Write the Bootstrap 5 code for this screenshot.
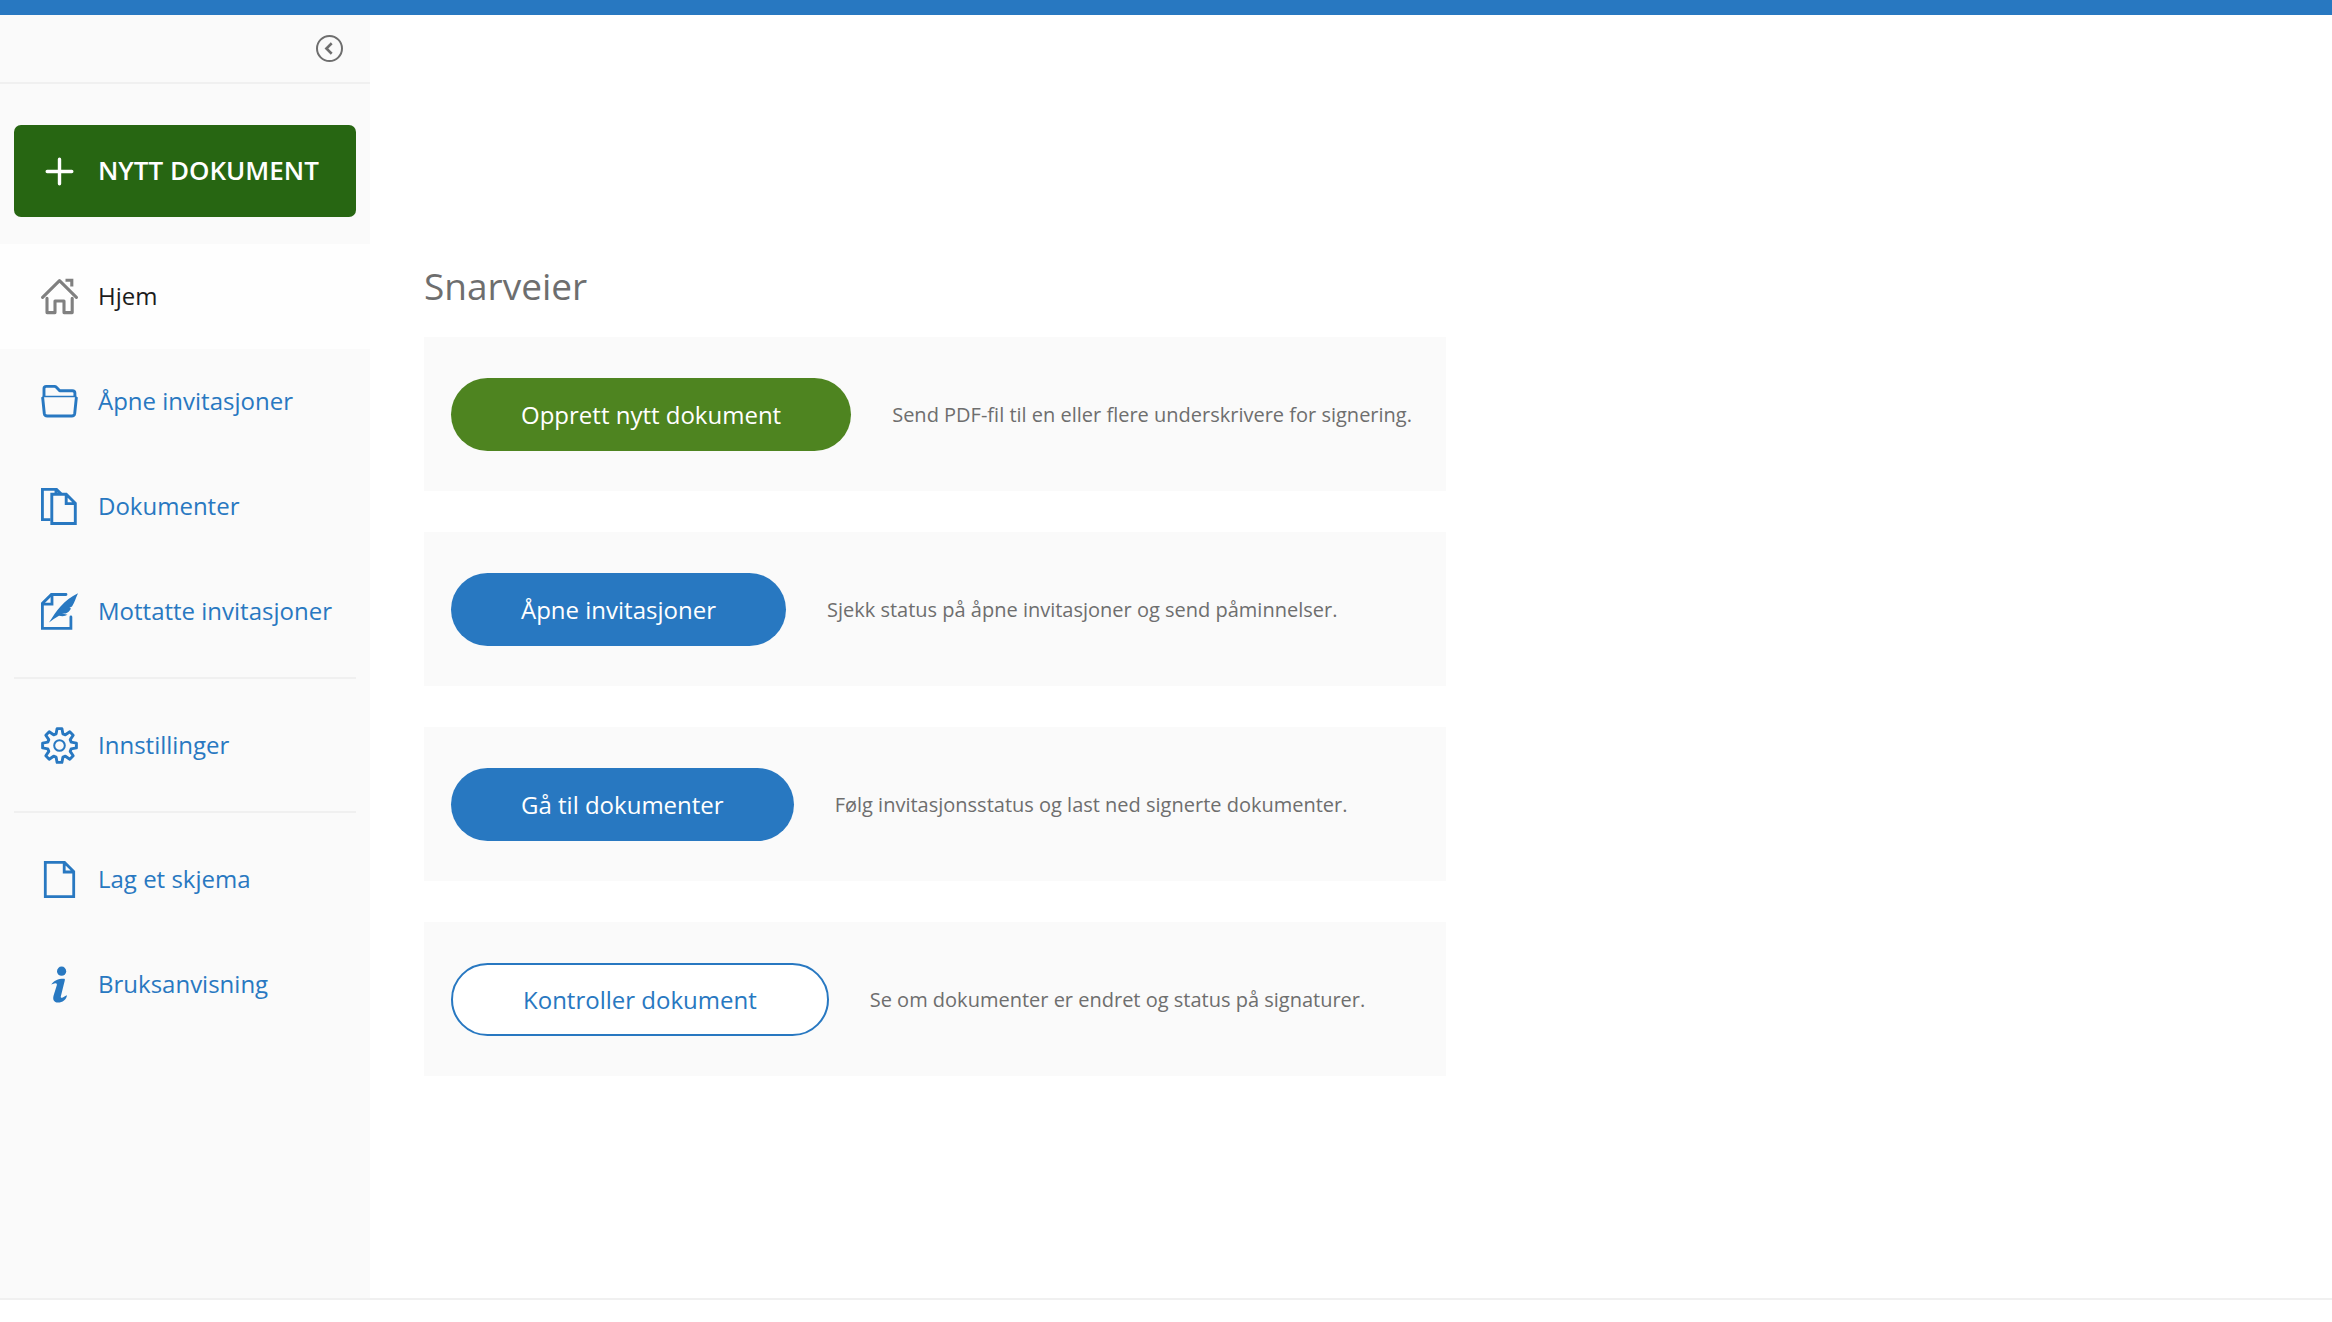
<!DOCTYPE html>
<html lang="nb">
<head>
<meta charset="utf-8">
<meta name="viewport" content="width=device-width, initial-scale=1">
<title>Hjem</title>
<link href="https://cdn.jsdelivr.net/npm/bootstrap@5.3.0/dist/css/bootstrap.min.css" rel="stylesheet">
<style>
:root { --brand: #2878c1; --soft: #fafafa; --rule: #f0f0f0; --muted: #6e6e6e; }
body { font-family: "Open Sans", sans-serif; font-size: 24px; line-height: 32px; background: #fff; color: var(--muted); }
.app-shell { border-top: 15px solid var(--brand); }
.app-body { border-bottom: 2px solid var(--rule); }
.app-footer { height: 22px; }
.side-panel { width: 370px; background: var(--soft); }
.side-head { height: 69px; padding-right: 27px; border-bottom: 2px solid var(--rule); }
.toggle-btn { width: 27px; height: 27px; color: #6e6e6e; }
.new-wrap { padding: 41px 14px 27px; }
.new-btn { height: 92px; padding: 0 27px; gap: 20px; border-radius: 7px; background: #276612; color: #fff; font-size: 26px; font-weight: 600; }
.new-btn:hover { background: #1f540e; color: #fff; }
.side-link { height: 105px; padding: 0 41px; gap: 20px; color: var(--brand); }
.side-link.active { background: #fefefe; color: #1c1c1c; }
.side-link.active svg { color: #808080; }
.side-text { padding-bottom: 2px; }
.side-icon { width: 37px; height: 37px; flex: none; }
.side-rule { height: 2px; margin: 13px 14px 14px; background: var(--rule); }
.main-area { padding: 245px 54px 80px; }
.main-title { font-size: 37px; line-height: 52px; font-weight: 400; margin: 0 0 25px; color: var(--muted); }
.shortcut-list { gap: 41px; min-width: 1022px; }
.shortcut { padding: 41px 27px 40px; gap: 41px; background: var(--soft); font-size: 20px; }
.pill-btn { height: 73px; padding: 0 70px; border-radius: 37px; font-size: 24px; border: 0; color: #fff; }
.pill-green, .pill-green:hover { background: #4e8420; color: #fff; }
.pill-blue, .pill-blue:hover { background: var(--brand); color: #fff; }
.pill-outline, .pill-outline:hover { background: #fff; color: var(--brand); border: 2px solid var(--brand); }
</style>
<script src="https://cdn.jsdelivr.net/npm/bootstrap@5.3.0/dist/js/bootstrap.bundle.min.js"></script>
</head>
<body>
<div class="app-shell d-flex flex-column min-vh-100">
  <div class="app-body d-flex flex-grow-1">
    <aside class="side-panel flex-shrink-0">
      <div class="side-head d-flex align-items-center justify-content-end">
        <button type="button" class="toggle-btn btn border-0 p-0 d-flex" aria-label="Skjul meny">
          <svg viewBox="0 0 27 27" width="27" height="27" fill="none" stroke="currentColor" stroke-width="2"><circle cx="13.5" cy="13.5" r="12.5"/><path d="M15.7 8.3L10.4 13.5l5.3 5.2" stroke-width="2.6"/></svg>
        </button>
      </div>
      <div class="new-wrap">
        <button type="button" class="new-btn btn border-0 w-100 d-flex align-items-center text-nowrap">
          <svg class="side-icon" viewBox="0 0 37 37" fill="none" stroke="currentColor" stroke-width="3.4" stroke-linecap="round"><path d="M18.5 6.200v24.600M6.200 18.500h24.600"/></svg>
          <span class="side-text">NYTT DOKUMENT</span>
        </button>
      </div>
      <nav class="d-flex flex-column text-nowrap">
        <a href="#" class="side-link active d-flex align-items-center text-decoration-none" aria-current="page">
          <svg class="side-icon" viewBox="0 0 37 37" fill="none" stroke="currentColor" stroke-width="3.1" stroke-linecap="round" stroke-linejoin="round"><path d="M1.600 19.300L18.500 2.600l16.900 16.700M6 20.300v14.300h8V23h9v11.600h8.200V20.300"/><path d="M24.500 2.200h6.300v6.200" stroke-linecap="butt" stroke-linejoin="miter"/></svg>
          <span class="side-text">Hjem</span>
        </a>
        <a href="#" class="side-link d-flex align-items-center text-decoration-none">
          <svg class="side-icon" viewBox="0 0 37 37" fill="none" stroke="currentColor" stroke-width="2.900" stroke-linejoin="round"><path d="M3 14V5.600Q3 3.400 5.200 3.400h8.200q1.200 0 2 .9l3.300 3.400h12.600q2.600 0 2.600 2.400V14M1.600 14l1.700 16.500Q3.700 33 6.200 33h24.600Q33.300 33 33.700 30.500L35.400 14"/><path d="M1.600 13.500h33.800" stroke-width="1.500"/></svg>
          <span class="side-text">Åpne invitasjoner</span>
        </a>
        <a href="#" class="side-link d-flex align-items-center text-decoration-none">
          <svg class="side-icon" viewBox="0 0 37 37" fill="none" stroke="currentColor" stroke-width="2.900"><path d="M9.500 31.600H1.400V1.400H15.500L20.500 6.200M15 1.500V6"/><path d="M10.800 6.200H25.200L34.300 15.300V35.500H10.800zM25.200 6.200v9.400h9"/></svg>
          <span class="side-text">Dokumenter</span>
        </a>
        <a href="#" class="side-link d-flex align-items-center text-decoration-none">
          <svg class="side-icon" viewBox="0 0 37 37" fill="none" stroke="currentColor" stroke-width="2.800"><path d="M25 1.500H10.400L1.400 10.400V35.400H29.900V24" stroke-linecap="round"/><path d="M11 1.500V11.200H1.500"/><path d="M8 29.500C11.500 24 15 18.500 19.500 13.500 24.500 8 30 3.500 37 .200 34.500 5.500 33.500 9.500 31 13.500L28.500 14.700 30 15.400Q28 19.500 24.500 20.400L21 20.500 26.500 21.800Q23 24 18 22.700 13 25.500 8 29.500z" fill="currentColor" stroke="none"/></svg>
          <span class="side-text">Mottatte invitasjoner</span>
        </a>
        <div class="side-rule"></div>
        <a href="#" class="side-link d-flex align-items-center text-decoration-none">
          <svg class="side-icon" viewBox="0 0 37 37" fill="none" stroke="currentColor" stroke-width="2.900" stroke-linejoin="round"><circle cx="18.500" cy="18.500" r="5.300" stroke-width="2"/><path id="gear"/></svg>
          <span class="side-text">Innstillinger</span>
        </a>
        <div class="side-rule"></div>
        <a href="#" class="side-link d-flex align-items-center text-decoration-none">
          <svg class="side-icon" viewBox="0 0 37 37" fill="none" stroke="currentColor" stroke-width="2.800"><path d="M4.300 1.400H23.500L32.700 10.500V35.600H4.300zM23.200 1.400V11H32.500"/></svg>
          <span class="side-text">Lag et skjema</span>
        </a>
        <a href="#" class="side-link d-flex align-items-center text-decoration-none">
          <svg class="side-icon" viewBox="0 0 37 37" fill="currentColor"><circle cx="20.600" cy="5.200" r="4.600"/><path d="M10.200 18.500C13 14.500 17 12.600 23.200 12.700 24.300 12.800 23.800 14.500 23.400 16L19.800 30.500C19.600 31.700 20.500 32.200 21.700 31.500 23.300 30.700 24.300 29.600 26 29.200 25.500 33.500 21.500 36.600 17 36.600 12.800 36.400 11.500 33.500 12.600 29.500L15.800 19.300C16.300 17.200 14.900 16.700 13.300 17.500z"/></svg>
          <span class="side-text">Bruksanvisning</span>
        </a>
      </nav>
    </aside>
    <main class="main-area flex-grow-1 d-flex flex-column align-items-start">
      <h1 class="main-title">Snarveier</h1>
      <div class="shortcut-list d-flex flex-column">
        <div class="shortcut d-flex align-items-center">
          <button type="button" class="pill-btn pill-green btn text-nowrap">Opprett nytt dokument</button>
          <span>Send PDF-fil til en eller flere underskrivere for signering.</span>
        </div>
        <div class="shortcut d-flex align-items-center">
          <button type="button" class="pill-btn pill-blue btn text-nowrap">Åpne invitasjoner</button>
          <span>Sjekk status på åpne invitasjoner og send påminnelser.</span>
        </div>
        <div class="shortcut d-flex align-items-center">
          <button type="button" class="pill-btn pill-blue btn text-nowrap">Gå til dokumenter</button>
          <span>Følg invitasjonsstatus og last ned signerte dokumenter.</span>
        </div>
        <div class="shortcut d-flex align-items-center">
          <button type="button" class="pill-btn pill-outline btn text-nowrap">Kontroller dokument</button>
          <span>Se om dokumenter er endret og status på signaturer.</span>
        </div>
      </div>
    </main>
  </div>
  <footer class="app-footer"></footer>
</div>
<script>
// Eight-toothed gear outline: four points per tooth around the centre.
const teeth = [];
for (let i = 0; i < 8; i++) {
  for (const [offset, radius] of [[-16, 12.2], [-8, 17.1], [8, 17.1], [16, 12.2]]) {
    const a = (i * 45 + offset) * Math.PI / 180;
    teeth.push((18.5 + radius * Math.sin(a)).toFixed(1) + " " + (18.5 - radius * Math.cos(a)).toFixed(1));
  }
}
document.getElementById("gear").setAttribute("d", "M" + teeth.join("L") + "Z");
</script>
</body>
</html>
